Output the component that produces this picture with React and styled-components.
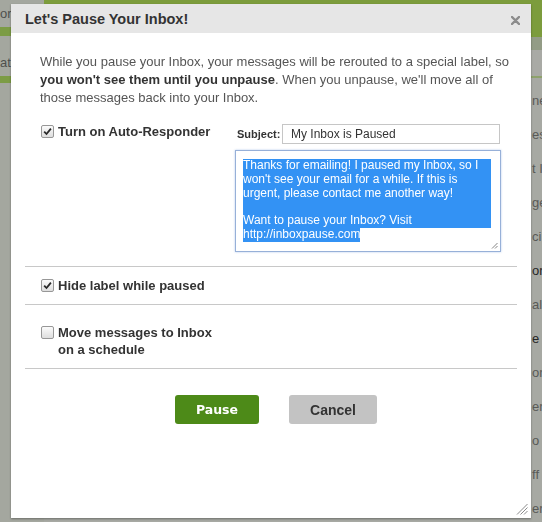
import React from 'react'
import styled, { createGlobalStyle } from 'styled-components'

const GlobalStyle = createGlobalStyle`
  html, body {
    margin: 0;
    padding: 0;
    background: #a7a9a3;
    overflow: hidden;
  }
  * { box-sizing: border-box; }
`

const listRows = [
  { text: 'ne' },
  { text: 'es' },
  { text: 't I' },
  { text: 'ge' },
  { text: 'ci' },
  { text: 'ori', unread: true },
  { text: 'alk' },
  { text: 'e', unread: true },
  { text: 'or' },
  { text: 'er' },
  { text: 'o' },
  { text: 'ff' },
  { text: 'er' }
]

const replyLines = [
  'Thanks for emailing! I paused my Inbox, so I',
  "won't see your email for a while. If this is",
  'urgent, please contact me another way!',
  '\u00a0',
  'Want to pause your Inbox? Visit'
]

const Check = ({ checked }) => (
  <Box checked={checked}>
    {checked && (
      <svg width="9" height="9" viewBox="0 0 9 9">
        <path d="M1.2 4.6 L3.5 7 L7.9 1.6" fill="none" stroke="#2a2a2a" strokeWidth="1.8" />
      </svg>
    )}
  </Box>
)

const App = () => (
  <>
    <GlobalStyle />
    <Page>
      <Sidebar>
        <SideItem height={27} pad={5}>or</SideItem>
        <SideBar height={9} />
        <SideItem height={40} pad={18}>at</SideItem>
        <SideBar height={7} />
      </Sidebar>
      <Main>
        <TopBar />
        <Toolbar />
        <ToolbarBody />
        <List>
          {listRows.map((row, i) => (
            <ListRow key={i} unread={row.unread}>{row.text}</ListRow>
          ))}
        </List>
      </Main>
    </Page>

    <Modal>
      <Header>
        <Title>Let's Pause Your Inbox!</Title>
        <Close aria-label="close">
          <svg width="9" height="9" viewBox="0 0 9 9">
            <path d="M1 1 L8 8 M8 1 L1 8" stroke="#8c8c8c" strokeWidth="2.4" strokeLinecap="round" />
          </svg>
        </Close>
      </Header>
      <Content>
        <Intro>
          While you pause your Inbox, your messages will be rerouted to a special label, so{' '}
          <strong>you won't see them until you unpause</strong>. When you unpause, we'll move all of
          those messages back into your Inbox.
        </Intro>

        <OptionRow top={17} bottom={14}>
          <OptionLabel>
            <Check checked />
            <LabelText>Turn on Auto-Responder</LabelText>
          </OptionLabel>
          <Responder>
            <SubjectRow>
              <SubjectLabel>Subject:</SubjectLabel>
              <SubjectInput>My Inbox is Paused</SubjectInput>
            </SubjectRow>
            <ReplyBox>
              {replyLines.map((line, i) => (
                <SelectedLine key={i}>{line}</SelectedLine>
              ))}
              <SelectedLine last>http://inboxpause.com</SelectedLine>
              <Grip width="7" height="7" viewBox="0 0 7 7" small>
                <path d="M6.5 1 L1 6.5 M6.5 4 L4 6.5" stroke="#777" strokeWidth="0.9" />
              </Grip>
            </ReplyBox>
          </Responder>
        </OptionRow>

        <OptionRow top={11} bottom={10}>
          <OptionLabel>
            <Check checked />
            <LabelText>Hide label while paused</LabelText>
          </OptionLabel>
        </OptionRow>

        <OptionRow top={20} bottom={10}>
          <OptionLabel>
            <Check />
            <LabelText>Move messages to Inbox on a schedule</LabelText>
          </OptionLabel>
        </OptionRow>

        <Actions>
          <Button primary>Pause</Button>
          <Button>Cancel</Button>
        </Actions>
      </Content>
      <Grip width="12" height="12" viewBox="0 0 12 12">
        <path d="M11.5 1 L1 11.5 M11.5 4.5 L4.5 11.5 M11.5 8 L8 11.5" stroke="#8a8a8a" strokeWidth="1" />
      </Grip>
    </Modal>
  </>
)

const Page = styled.div`
  display: flex;
  height: 522px;
  overflow: hidden;
  font-family: 'Liberation Sans', Arial, sans-serif;
`

const Sidebar = styled.div`
  width: 44px;
  flex-shrink: 0;
  background: #a4a79f;
  display: flex;
  flex-direction: column;
`

const SideItem = styled.div`
  flex-shrink: 0;
  height: ${({ height }) => height}px;
  padding-top: ${({ pad }) => pad}px;
  font-size: 13px;
  line-height: 17px;
  color: #4f504d;
`

const SideBar = styled.div`
  flex-shrink: 0;
  height: ${({ height }) => height}px;
  background: #7c9c45;
`

const Main = styled.div`
  flex: 1;
  display: flex;
  flex-direction: column;
`

const TopBar = styled.div`
  flex-shrink: 0;
  height: 37px;
  background: #7c9c3c;
`

const Toolbar = styled.div`
  flex-shrink: 0;
  height: 13px;
  background: #939c86;
`

const ToolbarBody = styled.div`
  flex-shrink: 0;
  height: 28px;
  background: #a9aaa5;
  border-bottom: 2px solid #8ea26c;
`

const List = styled.div`
  flex-shrink: 0;
  display: flex;
  flex-direction: column;
  padding-top: 6px;
`

const ListRow = styled.div`
  flex-shrink: 0;
  height: 34px;
  line-height: 34px;
  padding-left: 488px;
  font-size: 13px;
  color: ${({ unread }) => (unread ? '#262626' : '#595a57')};
  white-space: nowrap;
`

const Modal = styled.div`
  position: fixed;
  left: 11px;
  top: 4px;
  width: 520px;
  height: 514px;
  background: #fff;
  box-shadow: 0 1px 2px rgba(0, 0, 0, 0.35);
  display: flex;
  flex-direction: column;
  font-family: 'Liberation Sans', Arial, sans-serif;
`

const Header = styled.div`
  height: 29px;
  background: #e6e6e6;
  display: flex;
  align-items: center;
  justify-content: space-between;
  padding: 0 11px 0 14px;
`

const Title = styled.h1`
  margin: 0;
  font-size: 14.5px;
  font-weight: bold;
  color: #333;
`

const Close = styled.span`
  display: flex;
  padding-top: 3px;
`

const Content = styled.div`
  display: flex;
  flex-direction: column;
  padding: 0 14px;
`

const Intro = styled.p`
  margin: 20px 0 0 15px;
  font-size: 13px;
  line-height: 18px;
  color: #555;

  strong {
    color: #333;
  }
`

const OptionRow = styled.div`
  display: flex;
  padding: ${({ top, bottom }) => `${top}px 16px ${bottom}px 16px`};
  border-bottom: 1px solid #c8c8c8;
`

const OptionLabel = styled.label`
  width: 184px;
  display: flex;
  align-items: flex-start;
  gap: 4px;
`

const Box = styled.span`
  flex-shrink: 0;
  width: 13px;
  height: 13px;
  margin-top: 1px;
  border: 1px solid #979797;
  border-radius: 2px;
  background: linear-gradient(#fbfbfb, #dedede);
  display: flex;
  align-items: center;
  justify-content: center;
`

const LabelText = styled.span`
  font-size: 13px;
  font-weight: bold;
  line-height: 17px;
  color: #333;
  margin-top: -1px;
`

const Responder = styled.div`
  width: 266px;
  margin-left: 10px;
  display: flex;
  flex-direction: column;
  gap: 6px;
`

const SubjectRow = styled.div`
  display: flex;
  align-items: center;
  justify-content: space-between;
  padding-left: 2px;
`

const SubjectLabel = styled.span`
  font-size: 11px;
  font-weight: bold;
  color: #333;
`

const SubjectInput = styled.div`
  width: 218px;
  height: 20px;
  margin-right: 1px;
  border: 1px solid #c6c6c6;
  padding: 0 8px;
  font-size: 12px;
  line-height: 18px;
  color: #333;
`

const ReplyBox = styled.div`
  position: relative;
  height: 102px;
  border: 1px solid #97b0d8;
  box-shadow: 0 0 2px rgba(90, 140, 215, 0.45);
  padding: 8px 9px 8px 7px;
  font-size: 12px;
  line-height: 13.8px;
`

const SelectedLine = styled.div`
  display: ${({ last }) => (last ? 'inline-block' : 'block')};
  background: #3392f4;
  color: #fff;
  white-space: nowrap;
`

const Grip = styled.svg`
  position: absolute;
  right: ${({ small }) => (small ? 2 : 3)}px;
  bottom: ${({ small }) => (small ? 2 : 3)}px;
`

const Actions = styled.div`
  display: flex;
  justify-content: center;
  gap: 30px;
  padding: 26px 0 0 10px;
`

const Button = styled.button`
  height: 29px;
  width: ${({ primary }) => (primary ? 84 : 88)}px;
  border: none;
  border-radius: 3px;
  background: ${({ primary }) => (primary ? '#4d8a18' : '#c3c3c3')};
  color: ${({ primary }) => (primary ? '#fff' : '#333')};
  font-family: ${({ primary }) =>
    primary ? "'DejaVu Sans', Verdana, sans-serif" : "'Liberation Sans', Arial, sans-serif"};
  font-size: ${({ primary }) => (primary ? 12.5 : 14)}px;
  font-weight: bold;
  cursor: pointer;
`

export default App
